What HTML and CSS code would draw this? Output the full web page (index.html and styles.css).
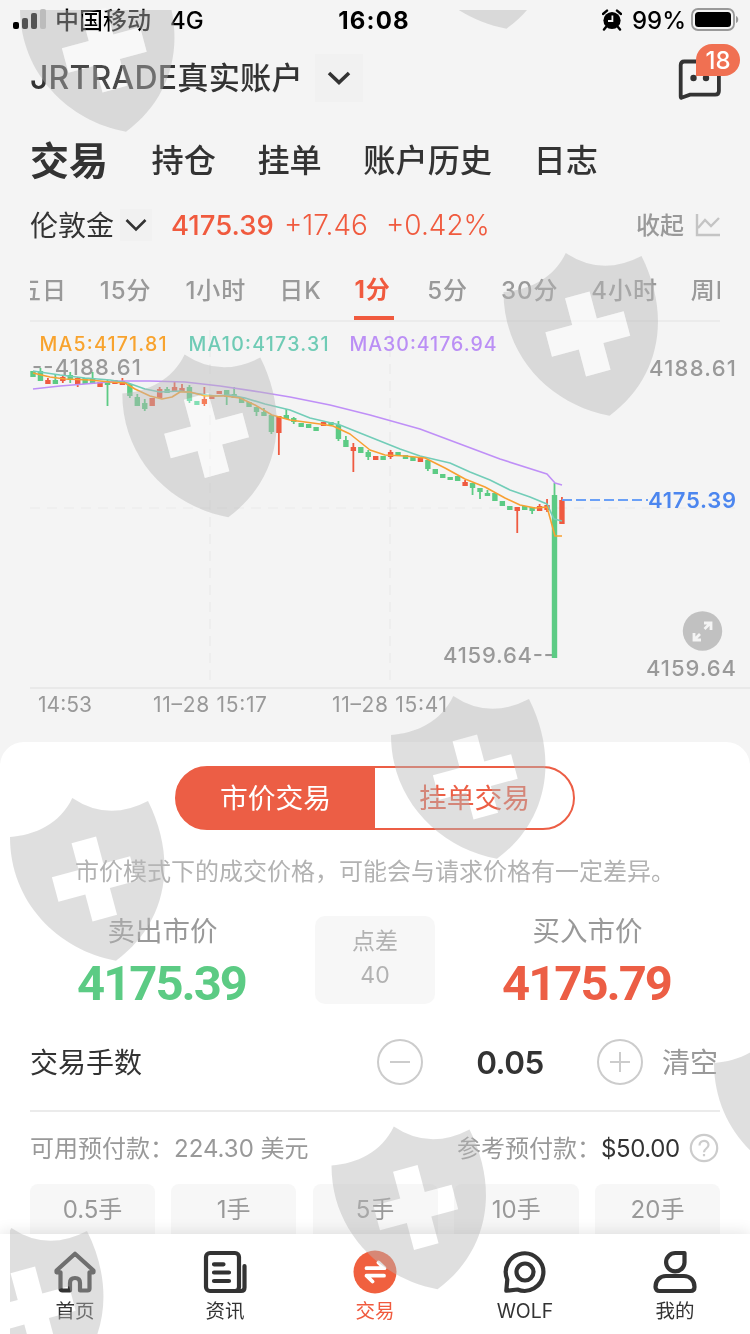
FILE: index.html
```
<!doctype html>
<html lang="zh-CN">
<head>
	<meta charset="utf-8">
	<meta name="viewport" content="width=device-width, initial-scale=1.0">
	<title>交易</title>
	<link rel="stylesheet" href="styles.css">
</head>
<body>
	<div class="screen">
		<div class="status">
			<div class="status-left">
				<svg width="34" height="22" viewBox="0 0 34 22"><rect x="0" y="13" width="6" height="7" rx="2"/><rect x="9" y="9" width="6" height="11" rx="2"/><rect x="18" y="4" width="6" height="16" rx="2"/><rect x="27" y="0" width="6" height="20" rx="2" fill="#bfbfbf"/></svg>
				<span class="carrier">中国移动</span>
				<span class="network">4G</span>
			</div>
			<div class="clock">16:08</div>
			<div class="status-right">
				<svg width="20" height="22" viewBox="0 0 20 22"><circle cx="10" cy="11.5" r="8.6"/><path d="M1 5L5 1.6M19 5l-4-3.4M4 18l-2 2.6M16 18l2 2.6" stroke="#000" stroke-width="2.4" stroke-linecap="round"/><path d="M10.4 6.5v5.5H6" fill="none" stroke="#f4f4f4" stroke-width="1.8"/></svg>
				<span class="percent">99%</span>
				<svg width="48" height="24" viewBox="0 0 48 24"><rect x="1" y="1" width="42" height="21" rx="6" fill="none" stroke="#999" stroke-width="1.8"/><rect x="4" y="4" width="36" height="15" rx="3.5"/><path d="M45 8c3 1 3 6 0 7z" fill="#999"/></svg>
			</div>
		</div>

		<div class="account">
			<div class="account-name"><span>JRTRADE</span>真实账户</div>
			<div class="account-arrow"><svg width="26" height="16" viewBox="0 0 26 16"><path d="M3 3l10 9.500L23 3" fill="none" stroke="#333" stroke-width="3.600"/></svg></div>
			<div class="message">
				<svg width="46" height="44" viewBox="0 0 46 44"><path d="M3.700 38V7q0-3.500 3.500-3.500h31q3.700 0 3.700 3.500v26q0 3.700-3.700 3.700H13L4.500 39.800q-.8.200-.8-1.800z" fill="none" stroke="#333" stroke-width="3.800"/><circle cx="16.500" cy="20" r="3.200" fill="#333"/><circle cx="29" cy="20" r="3.200" fill="#333"/></svg>
				<span class="badge">18</span>
			</div>
		</div>

		<nav class="tabs">
			<span class="tab tab-active">交易</span>
			<span class="tab">持仓</span>
			<span class="tab">挂单</span>
			<span class="tab">账户历史</span>
			<span class="tab">日志</span>
		</nav>

		<div class="symbol">
			<span class="symbol-name">伦敦金</span>
			<span class="symbol-arrow"><svg width="22" height="14" viewBox="0 0 22 14"><path d="M1.500 2L11 11.500 20.500 2" fill="none" stroke="#333" stroke-width="2.600"/></svg></span>
			<span class="symbol-price">4175.39</span>
			<span class="symbol-change">+17.46</span>
			<span class="symbol-rate">+0.42%</span>
			<span class="collapse">收起</span>
			<svg width="26" height="24" viewBox="0 0 26 24"><path d="M2 1v21h23M3 15l7-8 6 6 8-8" fill="none" stroke="#c4c4c4" stroke-width="2.400"/></svg>
		</div>

		<div class="periods">
			<span>五日</span>
			<span class="period-m15">15分</span>
			<span>1小时</span>
			<span>日K</span>
			<span class="period-active">1分</span>
			<span>5分</span>
			<span>30分</span>
			<span>4小时</span>
			<span>周K</span>
		</div>

		<svg class="chart" id="chart" width="750" height="420" viewBox="0 322 750 420">
			<path class="grid" d="M30 508H735M210 330V682M390 330V682"/>
			<path d="M30 688H750" stroke="#e9e9e9" stroke-width="2"/>
			<g class="ma">
				<text class="ma5" x="39.500" y="351" textLength="127">MA5:4171.81</text>
				<text class="ma10" x="188.500" y="351" textLength="140">MA10:4173.31</text>
				<text class="ma30" x="349.500" y="351" textLength="147">MA30:4176.94</text>
			</g>
			<g class="level">
				<text x="32" y="375" textLength="109">--4188.61</text>
				<text x="649" y="376" textLength="87">4188.61</text>
				<text x="443" y="663" textLength="111">4159.64--</text>
				<text x="646" y="676" textLength="90">4159.64</text>
			</g>
			<g id="candles"></g>
			<g class="lines">
				<path stroke="#bf8ff7" d="M33 389L60 386 85 384 120 381 150 381 185 382 220 386 260 392 290 397 330 405 370 415 420 429 460 444 500 459 547 474 555 483 562 485"/>
				<path stroke="#72cdb8" d="M33 371L60 375 85 378 110 380 128 383 145 389 160 392 180 391 200 394 215 396 230 395 245 398 265 404 290 410 310 418 340 425 360 433 380 441 400 449 420 456 450 463 470 472 490 480 510 490 530 497 547 504 554 519 562 521"/>
				<path stroke="#f8a032" d="M33 373L50 377 65 379 90 380 110 382 125 383 135 389 150 396 162 399 172 397 180 392 190 392 205 396 225 396 240 398 255 405 272 415 290 420 305 422 320 424 333 426 350 434 370 450 385 455 405 456 425 458 445 468 465 479 485 487 505 498 520 505 535 508 547 507 555 536 562 536"/>
			</g>
			<path d="M562 500H648" stroke="#6aa0f7" stroke-width="1.800" stroke-dasharray="10 4"/>
			<text class="current" x="648" y="508" textLength="88">4175.39</text>
			<g class="times">
				<text x="38" y="712" textLength="54">14:53</text>
				<text x="153" y="712" textLength="114">11–28 15:17</text>
				<text x="332" y="712" textLength="115">11–28 15:41</text>
			</g>
			<circle cx="702.500" cy="631" r="19.700" fill="#c1c1c1"/>
			<path d="M704.500 629l6-6M700 634l-6 6M704 623h7v7M694 633v7h7" fill="none" stroke="#f4f4f4" stroke-width="2.800"/>
		</svg>

		<section class="order">
			<div class="mode">
				<span class="mode-item mode-active">市价交易</span>
				<span class="mode-item">挂单交易</span>
			</div>
			<p class="hint">市价模式下的成交价格，可能会与请求价格有一定差异。</p>
			<div class="quotes">
				<div class="quote sell"><span>卖出市价</span><b>4175.39</b></div>
				<div class="spread"><span>点差</span><span>40</span></div>
				<div class="quote buy"><span>买入市价</span><b>4175.79</b></div>
			</div>
			<div class="lots">
				<span class="lots-label">交易手数</span>
				<svg width="46" height="46" viewBox="0 0 46 46"><circle cx="23" cy="23" r="22"/><path d="M13 23h20"/></svg>
				<span class="lots-value">0.05</span>
				<svg width="46" height="46" viewBox="0 0 46 46"><circle cx="23" cy="23" r="22"/><path d="M13 23h20M23 13v20"/></svg>
				<span class="clear">清空</span>
			</div>
			<div class="margin">
				<span class="available">可用预付款：224.30 美元</span>
				<span class="reference">参考预付款：</span>
				<span class="money">$50.00</span>
				<svg width="30" height="30" viewBox="0 0 30 30"><circle cx="15" cy="15" r="13.200"/><path d="M10.500 12.500c0-6 9-6 9-.5 0 3.500-4.500 3.500-4.500 7.200M15 21v2.300"/></svg>
			</div>
			<div class="presets">
				<span>0.5手</span>
				<span>1手</span>
				<span>5手</span>
				<span>10手</span>
				<span>20手</span>
			</div>
		</section>

		<footer class="tabbar">
			<div class="bar-item">
				<svg width="44" height="44" viewBox="0 0 44 44"><path d="M3.500 20.500L22 3.800l18.500 16.700v1.800h-4V38.500q0 2-2 2h-7.500V33q0-5-5-5t-5 5v7.500H9.500q-2 0-2-2V22.300h-4z"/></svg>
				<span>首页</span>
			</div>
			<div class="bar-item">
				<svg width="44" height="44" viewBox="0 0 44 44"><rect x="3" y="3" width="33" height="38" rx="4"/><path d="M32 41h6q3.500 0 3.500-3.500V16M11 14.300h9.500M11 22.500h15M11 31h15" stroke-linecap="round"/></svg>
				<span>资讯</span>
			</div>
			<div class="bar-item bar-active">
				<svg width="44" height="44" viewBox="0 0 44 44"><circle cx="22" cy="22" r="21.500"/><path d="M13.500 18.200H31.500L25.500 12.500M31 25.700H13.500L19.500 31.500"/></svg>
				<span>交易</span>
			</div>
			<div class="bar-item">
				<svg width="44" height="44" viewBox="0 0 44 44"><path d="M3.300 40.700L4.300 29.500A18.800 18.800 0 1 1 14.500 39.500z"/><circle cx="22" cy="22" r="8.500"/></svg>
				<span>WOLF</span>
			</div>
			<div class="bar-item">
				<svg width="44" height="44" viewBox="0 0 44 44"><path d="M31.500 3v9.500A9.200 9.200 0 1 1 22.300 3z"/><path d="M13 26h18c6 0 10.500 4.500 10.500 11 0 2.500-1.500 4-4 4h-31c-2.500 0-4-1.500-4-4C2.500 30.500 7 26 13 26z"/></svg>
				<span>我的</span>
			</div>
		</footer>

		<svg class="watermark" width="750" height="1334" viewBox="0 0 750 1334">
			<defs>
				<clipPath id="page"><rect x="10" y="10" width="740" height="1324"/></clipPath>
				<path id="cross" transform="translate(84.300 42) rotate(-15)" d="M-12.700-40.500h25.400v27.800h27.800v25.400H12.700v27.800h-25.400V12.700h-27.800v-25.400h27.800z"/>
				<mask id="hole" x="-5" y="-45" width="170" height="175" maskUnits="userSpaceOnUse">
					<rect x="-5" y="-45" width="170" height="175" fill="#fff"/>
					<use href="#cross" fill="#000" fill-opacity="1"/>
				</mask>
				<path id="shield" mask="url(#hole)" d="M0 0C25-2 50-13 62.300-39Q98-15 138-36C169 26 155 88 106 123.700 48 113 0 65 0 0z"/>
			</defs>
			<g clip-path="url(#page)" fill="#b8b8b8" fill-opacity=".45">
				<use href="#shield" x="20" y="8"/>
				<use href="#shield" x="400.500" y="-95"/>
				<use href="#shield" x="122.300" y="393.500"/>
				<use href="#shield" x="503.500" y="292"/>
				<use href="#shield" x="10" y="837"/>
				<use href="#shield" x="391" y="735"/>
				<use href="#shield" x="331.500" y="1165.500"/>
				<use href="#shield" x="714" y="1063"/>
				<use href="#shield" x="-51" y="1267"/>
			</g>
		</svg>
		<svg class="watermark watermark-cross" width="750" height="1334" viewBox="0 0 750 1334">
			<g fill="#fff" fill-opacity=".4">
				<use href="#cross" x="20" y="8"/>
				<use href="#cross" x="122.300" y="393.500"/>
				<use href="#cross" x="503.500" y="292"/>
			</g>
		</svg>
	</div>
	<script src="chart.js"></script>
</body>
</html>
```
FILE: styles.css
```
* {
	box-sizing: border-box;
}

body {
	margin: 0;
	background: #f4f4f4;
	color: #333;
	font-family: Inter, "Noto Sans CJK SC", sans-serif;
}

svg {
	display: block;
	flex: none;
}

.screen {
	position: relative;
	width: 750px;
	height: 1334px;
	overflow: hidden;
	display: flex;
	flex-direction: column;
}

/* status bar */
.status {
	height: 42px;
	padding: 0 11px 2px 13px;
	display: flex;
	align-items: center;
	color: #000;
	font-size: 24px;
	font-weight: 500;
}
.status-left,
.status-right {
	flex: 1;
	display: flex;
	align-items: center;
}
.status-right {
	justify-content: flex-end;
}
.carrier {
	margin-left: 8px;
	margin-top: -3px;
}
.network {
	margin-left: 19px;
}
.clock {
	font-weight: 700;
	letter-spacing: 1.200px;
	margin-left: -4px;
}
.percent {
	margin: 0 5px 0 10px;
}

/* account */
.account {
	height: 86px;
	padding: 0 27px 14px 30px;
	display: flex;
	align-items: center;
}
.account-name {
	font-size: 31.200px;
	font-weight: 500;
	white-space: nowrap;
	margin-top: -5px;
	letter-spacing: .2px;
}
.account-name span {
	font-size: 32px;
}
.account-arrow {
	width: 48px;
	height: 48px;
	margin-left: 12px;
	background: #f1f1f1;
	display: flex;
	align-items: center;
	justify-content: center;
}
.message {
	position: relative;
	margin-left: auto;
	margin-top: 4px;
}
.badge {
	position: absolute;
	left: 19px;
	top: -14px;
	width: 44px;
	height: 32px;
	border-radius: 16px 16px 16px 0;
	background: #f07052;
	color: #fff;
	font-size: 24px;
	font-weight: 500;
	line-height: 34px;
	text-align: center;
}

/* tabs */
.tabs {
	height: 66px;
	padding-left: 30px;
	display: flex;
	align-items: center;
	gap: 41.500px;
}
.tab {
	font-size: 32.200px;
	font-weight: 500;
	line-height: 48px;
}
.tab-active {
	font-size: 39px;
	font-weight: 700;
	margin-right: 2px;
}

/* symbol */
.symbol {
	height: 62px;
	padding: 0 29px 0 30px;
	display: flex;
	align-items: center;
	color: #f05a3e;
	font-size: 28px;
}
.symbol-name {
	color: #333;
	margin-top: -2px;
}
.symbol-arrow {
	width: 32px;
	height: 32px;
	margin-left: 6px;
	background: #f1f1f1;
	display: flex;
	align-items: center;
	justify-content: center;
}
.symbol-price {
	margin-left: 19px;
	font-size: 27.500px;
	font-weight: 500;
	width: 113px;
}
.symbol-change {
	width: 102px;
	font-weight: 350;
}
.symbol-rate {
	font-weight: 350;
}
.collapse {
	margin-left: auto;
	margin-right: 11px;
	margin-top: -3px;
	color: #999;
	font-size: 24px;
	font-weight: 500;
}

/* periods */
.periods {
	height: 66px;
	margin: 0 30px;
	border-bottom: 2px solid #ebebeb;
	display: flex;
	align-items: center;
	gap: 32.800px;
	overflow: hidden;
	color: #999;
	font-size: 24px;
	font-weight: 500;
	white-space: nowrap;
}
.periods span {
	letter-spacing: 1px;
	flex: none;
}
.periods span:first-child {
	margin-left: -13px;
}
.periods .period-m15 {
	margin-right: 1px;
}
.periods .period-active {
	color: #f05a3e;
	font-weight: 700;
	width: 40px;
	height: 64px;
	line-height: 68px;
	border-bottom: 4px solid #f05a3e;
}

/* chart */
.chart text {
	font-size: 22px;
	font-weight: 500;
	fill: #999;
}
.chart .ma text {
	font-size: 19.500px;
}
.chart .ma .ma5 {
	fill: #f8a32e;
}
.chart .ma .ma10 {
	fill: #6fcbb5;
}
.chart .ma .ma30 {
	fill: #bb8ff5;
}
.chart .times text {
	font-size: 21px;
	font-weight: 400;
}
.chart .current {
	fill: #4c86ef;
	font-weight: 600;
}
.grid {
	stroke: #e9e9e9;
	stroke-width: 1.200;
	stroke-dasharray: 10 7;
}
.lines path {
	fill: none;
	stroke-width: 1.600;
	stroke-linejoin: round;
}
.up {
	stroke: #ef5a40;
}
.down {
	stroke: #5ccb84;
}

/* order card */
.order {
	flex: none;
	height: 492px;
	padding: 24px 30px 0;
	border-radius: 24px 24px 0 0;
	background: #fff;
}
.mode {
	width: 400px;
	height: 64px;
	margin: 0 auto;
	border: 2px solid #ec5e45;
	border-radius: 32px;
	overflow: hidden;
	display: flex;
	background: linear-gradient(90deg, #ec5e45 50%, #fff 50%);
}
.mode-item {
	flex: 1;
	color: #ec5e45;
	font-size: 27.800px;
	line-height: 60px;
	text-align: center;
}
.mode-active {
	color: #fff;
	padding-right: 2px;
}
.hint {
	margin: 24px 0 0;
	color: #b2b2b2;
	font-size: 24px;
	line-height: 36px;
	text-align: center;
	white-space: nowrap;
}
.quotes {
	height: 116px;
	margin-top: 20px;
	display: flex;
	justify-content: space-between;
}
.quote {
	width: 265px;
	display: flex;
	flex-direction: column;
	align-items: center;
	color: #999;
	font-size: 27.500px;
	line-height: 42px;
}
.quote b {
	font-family: Roboto, sans-serif;
	font-size: 49px;
	font-weight: 700;
	line-height: 64px;
	letter-spacing: -2px;
	margin-left: -2px;
}
.sell b {
	color: #5ccb84;
}
.buy b {
	color: #ec5e45;
}
.spread {
	width: 120px;
	height: 88px;
	margin-top: 6px;
	padding-top: 8px;
	border-radius: 10px;
	background: #f7f7f7;
	color: #b2b2b2;
	display: flex;
	flex-direction: column;
	align-items: center;
	font-size: 23px;
	line-height: 34px;
}
.lots {
	height: 86px;
	display: flex;
	align-items: center;
	font-size: 28px;
	border-bottom: 2px solid #ebebeb;
	padding-bottom: 12px;
}
.lots svg {
	fill: none;
	stroke: #ccc;
	stroke-width: 2;
}
.lots-label {
	width: 347px;
	margin-top: -2px;
}
.lots-value {
	width: 174px;
	text-align: center;
	font-size: 31.500px;
	font-weight: 600;
	letter-spacing: -.5px;
}
.clear {
	margin-left: 19px;
	margin-top: -2px;
	color: #999;
}
.margin {
	height: 72px;
	display: flex;
	align-items: center;
	color: #999;
	font-size: 24px;
}
.available,
.reference {
	margin-top: -4px;
}
.reference {
	margin-left: auto;
}
.money {
	color: #333;
	width: 78px;
	letter-spacing: -.4px;
}
.margin svg {
	margin-left: 10px;
	margin-right: 1px;
	fill: none;
	stroke: #ccc;
	stroke-width: 2.200;
}
.presets {
	display: flex;
	justify-content: space-between;
}
.presets span {
	width: 125px;
	height: 50px;
	border-radius: 8px 8px 0 0;
	background: #f7f7f7;
	color: #999;
	font-size: 24px;
	line-height: 52px;
	text-align: center;
}

/* bottom bar */
.tabbar {
	position: relative;
	flex: none;
	height: 100px;
	padding-top: 16px;
	background: #fff;
	box-shadow: 0 -2px 14px rgba(0, 0, 0, .1);
	display: flex;
}
.bar-item {
	flex: 1;
	display: flex;
	flex-direction: column;
	align-items: center;
	font-size: 19.500px;
	line-height: 30px;
}
.bar-item span {
	margin-top: 2px;
}
.bar-item svg {
	fill: none;
	stroke: #333;
	stroke-width: 4.200;
	stroke-linejoin: round;
}
.bar-active {
	color: #f05a3e;
}
.bar-active svg {
	stroke: #fff;
	stroke-width: 3.800;
	stroke-linecap: round;
}
.bar-active circle {
	fill: #f0603f;
	stroke: none;
}

.watermark {
	position: absolute;
	left: 0;
	top: 0;
	pointer-events: none;
}
.watermark-cross {
	mix-blend-mode: overlay;
}
```
FILE: chart.js
```
// direction, body top, body bottom, wick top, wick bottom
const candles = [
	['d', 371, 377], ['d', 371, 381, 368], ['u', 380, 384, 378], ['d', 380, 384, 374], ['u', 377, 381, 375, 383],
	['d', 375, 380, 372, 383], ['u', 378, 384, 377, 387], ['d', 378, 384], ['d', 378, 384, 372], ['u', 382, 387],
	['d', 381, 385, 380, 406], ['u', 380, 384], ['u', 381, 385, 378], ['d', 384, 396, 384, 398], ['d', 397, 406, 394],
	['d', 403, 409, 399, 411], ['u', 398, 406], ['u', 389, 398, 387], ['d', 389, 393, 387], ['u', 387, 392, 382],
	['u', 388, 392, 384], ['d', 387, 401, 385, 403], ['d', 401, 405], ['u', 399, 404, 387, 406], ['u', 396, 399],
	['u', 391, 394], ['d', 390, 397, 390, 405], ['d', 394, 398, 387], ['d', 397, 403], ['d', 402, 407],
	['d', 407, 412, 407, 416], ['d', 412, 416, 408], ['d', 415, 432, 415, 434], ['u', 416, 433, 416, 455], ['d', 415, 419, 409],
	['d', 418, 422, 417, 424], ['d', 423, 427], ['d', 424, 428], ['d', 427, 431], ['u', 422, 426],
	['d', 422, 425], ['d', 425, 439, 421, 441], ['d', 440, 447, 436], ['u', 447, 451, 443, 472], ['d', 447, 453],
	['d', 452, 457, 450, 460], ['u', 456, 460], ['d', 456, 460], ['u', 452, 457, 450, 459], ['d', 452, 456],
	['d', 455, 459], ['d', 457, 461], ['u', 457, 462], ['d', 460, 469, 460, 471], ['d', 469, 474],
	['d', 474, 478], ['d', 477, 480], ['d', 476, 481], ['u', 482, 486, 480], ['d', 483, 488, 483, 495],
	['d', 488, 492, 488, 499], ['d', 493, 496, 490], ['d', 493, 501], ['d', 501, 506], ['d', 506, 510],
	['u', 507, 511, 507, 533], ['d', 506, 510], ['d', 507, 511, 507, 514], ['u', 506, 511, 504], ['u', 505, 510, 499, 512],
	['d', 495, 658, 483], ['u', 500, 524, 497]
];

const group = document.getElementById('candles');

function line(x, y1, y2, width, name) {
	const el = document.createElementNS('http://www.w3.org/2000/svg', 'path');
	el.setAttribute('d', `M${x} ${y1}V${y2}`);
	el.setAttribute('stroke-width', width);
	el.setAttribute('class', name);
	group.appendChild(el);
}

candles.forEach(([dir, top, bottom, high = top, low = bottom], i) => {
	const x = 33 + i * 7.45;
	const name = dir === 'u' ? 'up' : 'down';
	line(x, high, low, 1.8, name);
	line(x, top, bottom, 5.4, name);
});
```
